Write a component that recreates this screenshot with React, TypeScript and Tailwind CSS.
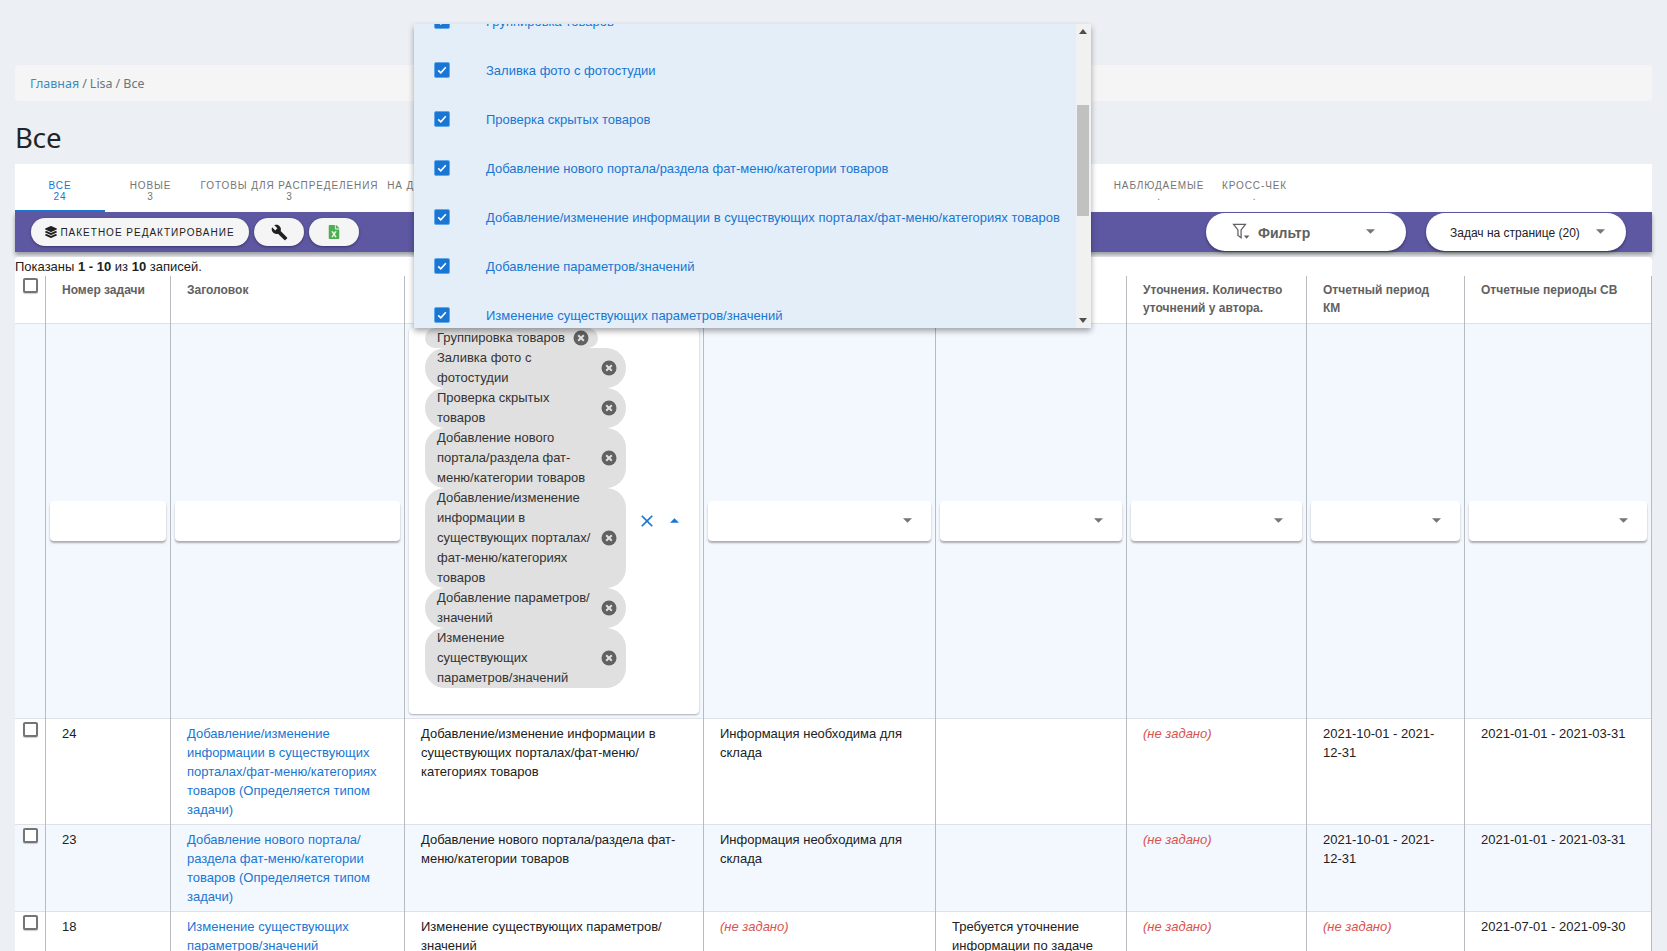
import { FaFileExcel, FaLayerGroup } from 'react-icons/fa';
import { MdBuild, MdClear } from 'react-icons/md';

const options = [
  'Заливка фото с фотостудии',
  'Проверка скрытых товаров',
  'Добавление нового портала/раздела фат-меню/категории товаров',
  'Добавление/изменение информации в существующих порталах/фат-меню/категориях товаров',
  'Добавление параметров/значений',
  'Изменение существующих параметров/значений',
];

const chips = ['Группировка товаров', ...options];

const rows = [
  {
    id: '24',
    title: 'Добавление/изменение информации в существующих порталах/фат-меню/категориях товаров (Определяется типом задачи)',
    type: 'Добавление/изменение информации в существующих порталах/фат-меню/категориях товаров',
    reason: 'Информация необходима для склада',
    note: '',
    period: '2021-10-01 - 2021-12-31',
    sv: '2021-01-01 - 2021-03-31',
  },
  {
    id: '23',
    title: 'Добавление нового портала/раздела фат-меню/категории товаров (Определяется типом задачи)',
    type: 'Добавление нового портала/раздела фат-меню/категории товаров',
    reason: 'Информация необходима для склада',
    note: '',
    period: '2021-10-01 - 2021-12-31',
    sv: '2021-01-01 - 2021-03-31',
  },
  {
    id: '18',
    title: 'Изменение существующих параметров/значений',
    type: 'Изменение существующих параметров/значений',
    reason: '',
    note: 'Требуется уточнение информации по задаче',
    period: '',
    sv: '2021-07-01 - 2021-09-30',
  },
];

const Caret = ({ up = false }: { up?: boolean }) => (
  <svg viewBox="0 0 10 5" className={up ? 'h-[5px] w-[9px] fill-[#1976d2]' : 'h-[5px] w-[9px] fill-[#757575]'}>
    <path d={up ? 'M0 5h10L5 0z' : 'M0 0h10L5 5z'} />
  </svg>
);

const Box = () => (
  <span className="block size-[15px] rounded-[2px] border-2 border-[#757575] bg-white shadow-[0_1px_1px_rgba(0,0,0,0.2)]" />
);

const Checked = () => (
  <span className="-mt-[2px] flex size-4 shrink-0 items-center justify-center rounded-[2px] border border-[#64a6ea] bg-[#1976d2]">
    <svg viewBox="0 0 12 12" className="size-3" fill="none" stroke="#fff" strokeWidth="1.6">
      <path d="M2.2 6.4l2.6 2.5 5-5.6" />
    </svg>
  </span>
);

const ChipDelete = () => (
  <svg viewBox="0 0 16 16" className="size-4 shrink-0">
    <circle cx="8" cy="8" r="7.5" fill="#616161" />
    <path d="M5.2 5.2l5.6 5.6M10.8 5.2l-5.6 5.6" stroke="#e0e0e0" strokeWidth="2" />
  </svg>
);

const NotSet = () => <span className="italic text-[#d9534f]">(не задано)</span>;

const FilterInput = ({ select = false }: { select?: boolean }) => (
  <div className="flex h-10 items-center justify-end rounded bg-white pr-[19px] shadow-[0_2px_2px_rgba(0,0,0,0.3)]">
    {select && <Caret />}
  </div>
);

const Tab = ({ label, count, active = false, className = '' }: { label: string; count: string; active?: boolean; className?: string }) => (
  <div
    className={`flex h-12 flex-col items-center pt-4 text-[10px] leading-[11px] tracking-[0.9px] ${active ? 'border-b-2 border-[#1976d2] text-[#1976d2]' : 'text-[#757575]'} ${className}`}
  >
    <span className="whitespace-nowrap uppercase">{label}</span>
    <span>{count}</span>
  </div>
);

export default function App() {
  return (
    <div className="relative min-h-[951px] overflow-hidden bg-[#ecf0f5] px-[15px] pt-[65px] font-['Liberation_Sans',sans-serif]">
      <div className="flex h-9 items-center rounded bg-[#f5f5f5] px-[15px] pt-[2px] font-['Noto_Sans',sans-serif] text-[12.5px] text-[#6c757d]">
        <span className="text-[#3c8dbc]">Главная</span>
        <span className="px-[3px]">/</span>
        Lisa
        <span className="px-[3px]">/</span>
        Все
      </div>
      <h1 className="mt-[17px] h-[46px] font-['Noto_Sans',sans-serif] text-[27.5px] leading-[40px] text-[#212529]">Все</h1>

      <div className="flex h-12 bg-white">
        <Tab label="Все" count="24" active className="w-[90px]" />
        <Tab label="Новые" count="3" className="w-[91px]" />
        <Tab label="Готовы для распределения" count="3" className="w-[187px]" />
        <Tab label="На доработке" count="0" className="w-[96px]" />
        <div className="w-[626px]" />
        <Tab label="Наблюдаемые" count="." className="w-[108px]" />
        <Tab label="Кросс-чек" count="." className="w-[83px]" />
      </div>

      <div className="flex h-10 items-center justify-between bg-[#5e58a3] pl-4 pr-[26px] shadow-[0_3px_4px_rgba(0,0,0,0.35)]">
        <div className="flex gap-[5px]">
          <button className="flex h-7 w-[218px] items-center justify-center gap-[3px] rounded-full bg-[#f5f5f5] text-[10px] tracking-[1px] text-[#212121] shadow-[0_1px_3px_rgba(0,0,0,0.4)]">
            <FaLayerGroup className="size-3" />
            ПАКЕТНОЕ РЕДАКТИРОВАНИЕ
          </button>
          <button className="flex h-7 w-[50px] items-center justify-center rounded-full bg-[#f5f5f5] text-[#212121] shadow-[0_1px_3px_rgba(0,0,0,0.4)]">
            <MdBuild className="size-[17px]" />
          </button>
          <button className="flex h-7 w-[50px] items-center justify-center rounded-full bg-[#f5f5f5] text-[#4caf50] shadow-[0_1px_3px_rgba(0,0,0,0.4)]">
            <FaFileExcel className="size-[14px]" />
          </button>
        </div>
        <div className="flex gap-5">
          <div className="relative flex h-[38px] w-[200px] items-center rounded-full bg-white pl-[26px] pt-[2px] text-[14px] font-bold text-[#616161] shadow-[0_2px_3px_rgba(0,0,0,0.35)]">
            <svg viewBox="0 0 24 24" className="-mt-[3px] mr-[7px] size-[19px] shrink-0" fill="none" stroke="#616161" strokeWidth="1.6">
              <path d="M2 3h15l-5.5 7v10l-4-3v-7z" />
              <path d="M15 17h7l-3.5 4z" fill="#616161" stroke="none" />
            </svg>
            Фильтр
            <span className="absolute right-[31px] top-4 flex">
              <Caret />
            </span>
          </div>
          <div className="relative flex h-[38px] w-[200px] items-center rounded-full bg-white pl-6 pt-[1px] text-xs text-[#212121] shadow-[0_2px_3px_rgba(0,0,0,0.35)]">
            Задач на странице (20)
            <span className="absolute right-[21px] top-4 flex">
              <Caret />
            </span>
          </div>
        </div>
      </div>

      <div className="mt-[5px] rounded-t bg-white">
        <div className="h-[19px] text-[13px] leading-5 text-[#212121]">
          Показаны <b>1 - 10</b> из <b>10</b> записей.
        </div>
        <table className="w-full table-fixed border-collapse text-[13px] leading-[19px] text-[#212121]">
          <colgroup>
            <col className="w-[30px]" />
            <col className="w-[125px]" />
            <col className="w-[234px]" />
            <col className="w-[299px]" />
            <col className="w-[232px]" />
            <col className="w-[191px]" />
            <col className="w-[180px]" />
            <col className="w-[158px]" />
            <col />
          </colgroup>
          <thead>
            <tr className="h-[47px] border-b border-[#dee2e6] align-top text-left text-[12px] leading-[18px] font-bold text-[#616161]">
              <th className="border-r border-[#b8bcc0] pl-[8px] pt-[2px]"><Box /></th>
              <th className="border-r border-[#b8bcc0] pl-[16.5px] pt-[5px]">Номер задачи</th>
              <th className="border-r border-[#b8bcc0] pl-[16.5px] pt-[5px]">Заголовок</th>
              <th className="border-r border-[#b8bcc0] pl-[16.5px] pt-[5px]">Тип задачи</th>
              <th className="border-r border-[#b8bcc0] pl-[16.5px] pt-[5px]">Причина</th>
              <th className="border-r border-[#b8bcc0] pl-[16.5px] pt-[5px]">Уточнение</th>
              <th className="border-r border-[#b8bcc0] pl-[16.5px] pt-[5px]">Уточнения. Количество уточнений у автора.</th>
              <th className="border-r border-[#b8bcc0] pl-[16.5px] pr-[30px] pt-[5px]">Отчетный период КМ</th>
              <th className="border-r border-[#b8bcc0] pl-[16.5px] pt-[5px]">Отчетные периоды СВ</th>
            </tr>
          </thead>
          <tbody>
            <tr className="h-[395px] border-b border-[#dee2e6] bg-[#f3f8fe]">
              <td className="border-r border-[#b8bcc0]" />
              <td className="border-r border-[#b8bcc0] px-1"><FilterInput /></td>
              <td className="border-r border-[#b8bcc0] px-1"><FilterInput /></td>
              <td className="border-r border-[#b8bcc0] px-1">
                <div className="flex h-[386px] items-center rounded bg-white pb-[26px] pl-4 shadow-[0_1px_2px_rgba(0,0,0,0.3)]">
                  <div className="flex w-[202px] shrink-0 flex-col items-start text-[13px] leading-5">
                    {chips.map((chip) => (
                      <span key={chip} className="flex items-center gap-[8px] rounded-[20px] bg-[#e0e0e0] pl-[12.5px] pr-[9px] text-[#333]">
                        <span className="max-w-[156px]">{chip}</span>
                        <ChipDelete />
                      </span>
                    ))}
                  </div>
                  <MdClear className="mb-[-26px] ml-[10px] size-[20px] text-[#1976d2]" />
                  <span className="mb-[-26px] ml-[13px] flex"><Caret up /></span>
                </div>
              </td>
              <td className="border-r border-[#b8bcc0] px-1"><FilterInput select /></td>
              <td className="border-r border-[#b8bcc0] px-1"><FilterInput select /></td>
              <td className="border-r border-[#b8bcc0] px-1"><FilterInput select /></td>
              <td className="border-r border-[#b8bcc0] px-1"><FilterInput select /></td>
              <td className="border-r border-[#b8bcc0] px-1"><FilterInput select /></td>
            </tr>
            {rows.map((row, i) => (
              <tr key={row.id} className={`border-b border-[#dee2e6] align-top ${i % 2 === 1 ? 'bg-[#f3f8fe]' : 'bg-white'}`}>
                <td className="border-r border-[#b8bcc0] pl-[8px] pt-[3px]"><Box /></td>
                <td className="border-r border-[#b8bcc0] py-[5px] pl-[16.5px] pr-4">{row.id}</td>
                <td className="border-r border-[#b8bcc0] py-[5px] pl-[16.5px] pr-4 text-[#1976d2]">{row.title}</td>
                <td className="border-r border-[#b8bcc0] py-[5px] pl-[16.5px] pr-4">{row.type}</td>
                <td className="border-r border-[#b8bcc0] py-[5px] pl-[16.5px] pr-4">{row.reason || <NotSet />}</td>
                <td className="border-r border-[#b8bcc0] py-[5px] pl-[16.5px] pr-4">{row.note}</td>
                <td className="border-r border-[#b8bcc0] py-[5px] pl-[16.5px] pr-4"><NotSet /></td>
                <td className="border-r border-[#b8bcc0] py-[5px] pl-[16.5px] pr-4">{row.period || <NotSet />}</td>
                <td className="border-r border-[#b8bcc0] py-[5px] pl-[16.5px] pr-4">{row.sv}</td>
              </tr>
            ))}
          </tbody>
        </table>
      </div>

      {/* Open multi-select list */}
      <div className="absolute left-[414px] top-6 flex h-[304px] w-[677px] overflow-hidden bg-[#e3eef9] shadow-[0_3px_6px_rgba(0,0,0,0.35)]">
        <div className="-mt-[27px] flex-1">
          {chips.map((option) => (
            <div key={option} className="flex h-[49px] items-center pl-5 text-[13px] text-[#1976d2]">
              <Checked />
              <span className="ml-9 whitespace-nowrap">{option}</span>
            </div>
          ))}
        </div>
        <div className="relative w-[15px] bg-[#f1f1f1]">
          <span className="absolute left-[3px] top-[5px] h-0 w-0 border-x-[4px] border-b-[5px] border-x-transparent border-b-[#505050]" />
          <div className="absolute left-[1px] top-[81px] h-[111px] w-[12px] bg-[#c1c1c1]" />
          <span className="absolute bottom-[5px] left-[3px] h-0 w-0 border-x-[4px] border-t-[5px] border-x-transparent border-t-[#505050]" />
        </div>
      </div>
    </div>
  );
}
